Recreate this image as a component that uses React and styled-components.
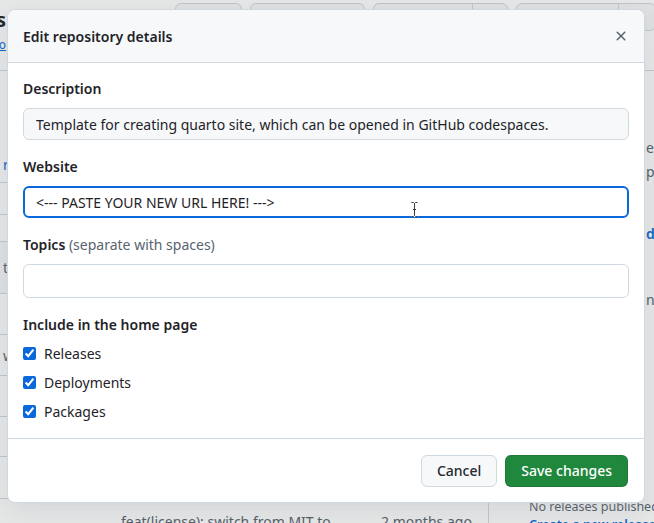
import styled, { createGlobalStyle } from "styled-components";

const GlobalStyle = createGlobalStyle`
  html, body {
    margin: 0;
    padding: 0;
    background: #ffffff;
  }
  body {
    font-family: "Noto Sans", "Liberation Sans", sans-serif;
    color: #1f2328;
  }
`;

const Page = styled.div`
  position: relative;
  width: 654px;
  height: 523px;
  overflow: hidden;
  background: #ffffff;
`;

/* ---------- the repository page behind the dialog ---------- */

const RepoHeader = styled.div`
  display: flex;
  height: 71px;
  border-bottom: 1px solid #d1d9e0;
  box-sizing: border-box;
`;

const TitleBlock = styled.div`
  width: 200px;
  margin-left: -194px;
  padding-top: 8px;
  text-align: right;
  flex-shrink: 0;
`;

const RepoName = styled.div`
  font-size: 20px;
  font-weight: 700;
  line-height: 24px;
`;

const RepoLink = styled.a`
  display: block;
  font-size: 12px;
  color: #0969da;
  text-decoration: underline;
  margin-top: 4px;
`;

const HeaderActions = styled.div`
  display: flex;
  gap: 8px;
  margin-left: 169px;
  margin-top: 3px;
  height: 28px;
`;

const GhostButton = styled.div`
  width: ${(p) => p.w}px;
  height: 28px;
  border: 1px solid #d1d9e0;
  border-radius: 6px;
  background: #f6f8fa;
  display: flex;
  flex-shrink: 0;
  box-sizing: border-box;
`;

const SplitPart = styled.div`
  margin-left: auto;
  width: ${(p) => p.w}px;
  border-left: 1px solid #d1d9e0;
`;

const RepoMain = styled.div`
  display: grid;
  grid-template-columns: 488px 1fr;
`;

const FileList = styled.div`
  display: flex;
  flex-direction: column;
`;

const FileRow = styled.div`
  height: ${(p) => p.h}px;
  border-bottom: 1px solid #d1d9e0;
  box-sizing: border-box;
  display: flex;
  align-items: ${(p) => (p.bottom ? "flex-end" : "center")};
  padding-bottom: ${(p) => (p.bottom ? 8 : 0)}px;
  font-size: 14px;
  color: #59636e;
  background: ${(p) => (p.shade ? "#f6f8fa" : "transparent")};
`;

const FileLetter = styled.span`
  color: ${(p) => (p.link ? "#0969da" : "#59636e")};
  margin-left: 3px;
`;

const CommitRow = styled.div`
  display: flex;
  font-size: 14px;
  color: #59636e;
  padding-top: 13px;
  line-height: 20px;
`;

const CommitMsg = styled.span`
  margin-left: 121px;
  width: 260px;
`;

const Sidebar = styled.div`
  border-left: 1px solid #d1d9e0;
  display: flex;
  flex-direction: column;
  font-size: 14px;
  color: #59636e;
  padding-top: 65px;
`;

const SideLine = styled.div`
  padding-left: ${(p) => p.indent}px;
  margin-top: ${(p) => p.gap || 0}px;
  line-height: ${(p) => p.lh || 24}px;
  font-size: ${(p) => p.size || 14}px;
  color: ${(p) => (p.link ? "#0969da" : "#59636e")};
  font-weight: ${(p) => (p.link ? 600 : 400)};
  white-space: nowrap;
`;

/* ---------- modal ---------- */

const Backdrop = styled.div`
  position: absolute;
  inset: 0;
  background: rgba(31, 35, 40, 0.11);
  padding: 9px 0 0 7px;
  box-sizing: border-box;
`;

const Dialog = styled.div`
  width: 638px;
  height: 494px;
  background: #ffffff;
  border: 1px solid #d1d9e0;
  border-radius: 8px;
  box-shadow: 0 8px 24px rgba(140, 149, 159, 0.2);
  box-sizing: border-box;
  display: flex;
  flex-direction: column;
  overflow: hidden;
`;

const DialogHeader = styled.div`
  height: 53px;
  flex-shrink: 0;
  background: #f6f8fa;
  border-bottom: 1px solid #d1d9e0;
  box-sizing: border-box;
  display: flex;
  align-items: center;
  padding: 0 15px;
`;

const DialogTitle = styled.h1`
  margin: 0;
  font-size: 14px;
  font-weight: 600;
  flex: 1;
`;

const CloseButton = styled.button`
  width: 16px;
  height: 16px;
  border: 0;
  padding: 0;
  background: none;
  display: flex;
  align-items: center;
  justify-content: center;
  color: #59636e;
`;

const DialogBody = styled.div`
  flex: 1;
  padding: 15px 15px 0;
  display: flex;
  flex-direction: column;
`;

const Field = styled.div`
  display: flex;
  flex-direction: column;
  margin-bottom: 16px;
`;

const Label = styled.label`
  font-size: 14px;
  font-weight: 600;
  line-height: 22px;
  margin-bottom: 8px;
`;

const Hint = styled.span`
  font-weight: 400;
  color: #59636e;
`;

const InputWrap = styled.div`
  position: relative;
`;

const TextInput = styled.input`
  width: 100%;
  height: ${(p) => p.h || 32}px;
  box-sizing: border-box;
  border: ${(p) => (p.focused ? "2px solid #0969da" : "1px solid #d1d9e0")};
  border-radius: 6px;
  background: ${(p) => (p.muted ? "#f6f8fa" : "#ffffff")};
  padding: 0 ${(p) => (p.focused ? 11 : 12)}px;
  font-family: "Noto Sans", "Liberation Sans", sans-serif;
  font-size: 14px;
  color: #1f2328;
  outline: none;
`;

const Cursor = styled.svg`
  position: absolute;
  left: 388px;
  top: 16px;
`;

const GroupTitle = styled.div`
  font-size: 14px;
  font-weight: 600;
  line-height: 22px;
  margin-bottom: 3px;
`;

const CheckRow = styled.label`
  display: flex;
  align-items: center;
  height: 29px;
  font-size: 14px;
  gap: 8px;
`;

const Check = styled.input`
  margin: 0;
  width: 13px;
  height: 13px;
  accent-color: #0969da;
`;

const DialogFooter = styled.div`
  height: 64px;
  flex-shrink: 0;
  border-top: 1px solid #d1d9e0;
  box-sizing: border-box;
  display: flex;
  justify-content: flex-end;
  align-items: center;
  gap: 8px;
  padding: 0 16px 0 0;
`;

const Button = styled.button`
  height: 32px;
  padding: 0 15px;
  border-radius: 6px;
  font-family: "Noto Sans", "Liberation Sans", sans-serif;
  font-size: 14px;
  font-weight: 500;
  border: 1px solid ${(p) => (p.primary ? "rgba(31,35,40,0.15)" : "#d1d9e0")};
  background: ${(p) => (p.primary ? "#1f883d" : "#f6f8fa")};
  color: ${(p) => (p.primary ? "#ffffff" : "#25292e")};
`;

const fileRows = [
  { h: 112, letter: "r", link: true, bottom: true },
  { h: 32, letter: "" },
  { h: 27, letter: "" },
  { h: 52, letter: "t", shade: true },
  { h: 41, letter: "" },
  { h: 41, letter: "w" },
  { h: 41, letter: "" },
  { h: 40, letter: "" },
  { h: 42, letter: "" },
];

const homeItems = ["Releases", "Deployments", "Packages"];

export default function App() {
  return (
    <Page>
      <GlobalStyle />

      <RepoHeader>
        <TitleBlock>
          <RepoName>quarto-codespaces</RepoName>
          <RepoLink>quarto-dev.github.io</RepoLink>
        </TitleBlock>
        <HeaderActions>
          <GhostButton w={67} />
          <GhostButton w={115} />
          <GhostButton w={135}>
            <SplitPart w={34} />
          </GhostButton>
          <GhostButton w={140}>
            <SplitPart w={36} />
          </GhostButton>
        </HeaderActions>
      </RepoHeader>

      <RepoMain>
        <FileList>
          {fileRows.map((r, i) => (
            <FileRow key={i} h={r.h} shade={r.shade} bottom={r.bottom}>
              <FileLetter link={r.link}>{r.letter}</FileLetter>
            </FileRow>
          ))}
          <CommitRow>
            <CommitMsg>feat(license): switch from MIT to</CommitMsg>
            <span>2 months ago</span>
          </CommitRow>
        </FileList>
        <Sidebar>
          <SideLine indent={157}>ead</SideLine>
          <SideLine indent={157}>pen</SideLine>
          <SideLine indent={157} link gap={38}>d</SideLine>
          <SideLine indent={157} gap={42}>n</SideLine>
          <SideLine indent={40} gap={186} lh={18} size={12.5}>No releases published</SideLine>
          <SideLine indent={40} lh={18} size={12.5} link>Create a new release</SideLine>
        </Sidebar>
      </RepoMain>

      <Backdrop>
        <Dialog role="dialog" aria-label="Edit repository details">
          <DialogHeader>
            <DialogTitle>Edit repository details</DialogTitle>
            <CloseButton aria-label="Close">
              <svg width="16" height="16" viewBox="0 0 16 16" fill="currentColor">
                <path d="M3.72 3.72a.75.75 0 0 1 1.06 0L8 6.94l3.22-3.22a.749.749 0 0 1 1.275.326.749.749 0 0 1-.215.734L9.06 8l3.22 3.22a.749.749 0 0 1-.326 1.275.749.749 0 0 1-.734-.215L8 9.06l-3.22 3.22a.751.751 0 0 1-1.042-.018.751.751 0 0 1-.018-1.042L6.94 8 3.72 4.78a.75.75 0 0 1 0-1.06Z" />
              </svg>
            </CloseButton>
          </DialogHeader>

          <DialogBody>
            <Field>
              <Label>Description</Label>
              <TextInput
                muted
                readOnly
                value="Template for creating quarto site, which can be opened in GitHub codespaces."
              />
            </Field>

            <Field>
              <Label>Website</Label>
              <InputWrap>
                <TextInput focused readOnly value="<--- PASTE YOUR NEW URL HERE! --->" />
                <Cursor width="7" height="15" viewBox="0 0 7 15">
                  <path
                    d="M0.5 0.5h2l1 1 1-1h2M3.5 1.5v12M0.5 14.5h2l1-1 1 1h2M2 7.5h3"
                    fill="none"
                    stroke="#ffffff"
                    strokeWidth="2.2"
                  />
                  <path
                    d="M0.5 0.5h2l1 1 1-1h2M3.5 1.5v12M0.5 14.5h2l1-1 1 1h2M2 7.5h3"
                    fill="none"
                    stroke="#3b3b3b"
                    strokeWidth="1"
                  />
                </Cursor>
              </InputWrap>
            </Field>

            <Field>
              <Label>
                Topics <Hint>(separate with spaces)</Hint>
              </Label>
              <TextInput h={34} readOnly value="" />
            </Field>

            <GroupTitle>Include in the home page</GroupTitle>
            {homeItems.map((item) => (
              <CheckRow key={item}>
                <Check type="checkbox" checked readOnly />
                {item}
              </CheckRow>
            ))}
          </DialogBody>

          <DialogFooter>
            <Button>Cancel</Button>
            <Button primary>Save changes</Button>
          </DialogFooter>
        </Dialog>
      </Backdrop>
    </Page>
  );
}
